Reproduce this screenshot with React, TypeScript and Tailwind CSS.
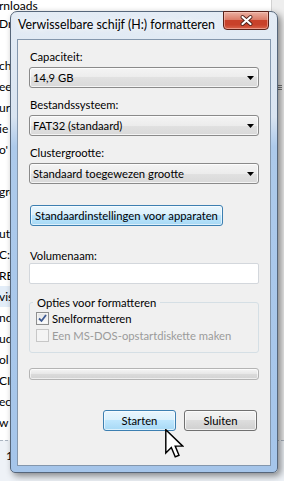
import React from "react";

const rows: { t: string; hl?: boolean }[] = [
  { t: "Dr" },
  { t: "" },
  { t: "ch" },
  { t: "eel" },
  { t: "ur" },
  { t: "ie" },
  { t: "o'" },
  { t: "" },
  { t: "grc" },
  { t: "" },
  { t: "ut" },
  { t: "C:" },
  { t: "RE" },
  { t: "vis", hl: true },
  { t: "nd" },
  { t: "ud" },
  { t: "ol" },
  { t: "CI" },
  { t: "ec" },
  { t: "w" },
];

function Arrow() {
  return (
    <svg width="7" height="4" viewBox="0 0 7 4">
      <path d="M0 0H7L3.5 4Z" fill="#000" />
    </svg>
  );
}

function Combo({ text }: { text: string }) {
  return (
    <div className="mt-[3px] h-[21px] w-full rounded-[3px] border border-[#8a8a8a] bg-[linear-gradient(180deg,#f4f4f4_0%,#ececec_50%,#e1e1e1_50%,#d9d9d9_100%)] flex items-center pl-[3px] pr-[4px] shadow-[inset_0_0_0_1px_rgba(255,255,255,0.7)]">
      <span className="flex-1 leading-[15px] whitespace-nowrap">{text}</span>
      <Arrow />
    </div>
  );
}

const blueBtn =
  "rounded-[3px] border border-[#3c7fb1] bg-[linear-gradient(180deg,#eaf6fd_0%,#d9f0fc_50%,#bee6fd_50%,#a7d9f5_100%)] shadow-[inset_0_0_0_1px_rgba(255,255,255,0.6)] flex items-center justify-center leading-[15px] whitespace-nowrap";
const greyBtn =
  "rounded-[3px] border border-[#707070] bg-[linear-gradient(180deg,#f2f2f2_0%,#ebebeb_50%,#dddddd_50%,#cfcfcf_100%)] shadow-[inset_0_0_0_1px_rgba(255,255,255,0.7)] flex items-center justify-center leading-[15px] whitespace-nowrap";

export default function App() {
  return (
    <div className="relative w-[284px] h-[481px] overflow-hidden bg-white font-['Lato',sans-serif] text-[11.25px] text-black">
      {/* Explorer window behind */}
      <div className="flex flex-col h-full">
        <div className="flex h-[440px]">
          <div className="flex-1 overflow-hidden text-[12px]">
            <div className="-mt-[3px] flex flex-col">
              <div className="h-[16px] flex items-center whitespace-nowrap -ml-[1px] leading-[15px]">rnloads</div>
              {rows.map((r, i) => (
                <div
                  key={i}
                  className={
                    r.hl
                      ? "h-[21px] flex items-center whitespace-nowrap -ml-[1px] leading-[15px] bg-[#e3edf8]"
                      : "h-[21px] flex items-center whitespace-nowrap -ml-[1px] leading-[15px]"
                  }
                >
                  {r.t}
                </div>
              ))}
            </div>
          </div>
          <div className="w-[13px] border-l border-[#d2d2d2] bg-[#eeeeee] flex flex-col pt-[85px] pl-[6px] gap-[1px]">
            <div className="w-[4px] h-px bg-[#7a7a7a]" />
            <div className="w-[4px] h-px bg-[#7a7a7a]" />
            <div className="w-[4px] h-px bg-[#7a7a7a]" />
          </div>
        </div>
        <div className="flex-1 border-t border-dashed border-[#aab4c0] bg-[#eef2f7] pt-[7px] pl-[6px] leading-[15px] text-[12px]">
          1
        </div>
      </div>

      {/* Dialog */}
      <div className="absolute left-[10px] top-[11px] w-[268px] h-[462px] rounded-t-[7px] rounded-b-[5px] border border-[#56667a] bg-[linear-gradient(180deg,#e4ecf5_0px,#d9e4f1_105px,#adcaeb_135px,#a5c5ea_100%)] shadow-[3px_3px_7px_rgba(0,0,0,0.45)] flex flex-col px-[6px] pb-[6px]">
        {/* Title bar */}
        <div className="h-[27px] flex items-start">
          <span className="pt-[5px] pl-[1px] text-[12.4px] leading-[15px] whitespace-nowrap [text-shadow:0_0_6px_#ffffff,0_0_10px_#ffffff]">
            Verwisselbare schijf (H:) formatteren
          </span>
          <div className="ml-auto mr-[2px] -mt-[1px] w-[46px] h-[19px] rounded-b-[4px] border border-[#5a2119] bg-[linear-gradient(180deg,#eab0a2_0%,#dc7d69_45%,#c8412a_50%,#c8412a_75%,#d9654c_100%)] shadow-[inset_0_0_0_1px_rgba(255,210,200,0.5)] flex items-center justify-center">
            <svg width="13" height="11" viewBox="0 0 13 11">
              <path d="M2.5 2L10.5 9M10.5 2L2.5 9" stroke="#4a1e17" strokeWidth="3.8" strokeLinecap="round" />
              <path d="M2.5 2L10.5 9M10.5 2L2.5 9" stroke="#ffffff" strokeWidth="2.2" strokeLinecap="round" />
            </svg>
          </div>
        </div>

        {/* Client area */}
        <div className="flex-1 border border-[#8497ad] bg-[#f0f0f0] px-[11px] pt-[9px] flex flex-col">
          <div className="pl-[1px] leading-[15px]">Capaciteit:</div>
          <Combo text="14,9 GB" />
          <div className="mt-[9px] pl-[1px] leading-[15px]">Bestandssysteem:</div>
          <Combo text="FAT32 (standaard)" />
          <div className="mt-[9px] pl-[1px] leading-[15px]">Clustergrootte:</div>
          <Combo text="Standaard toegewezen grootte" />

          <div className={"mt-[21px] ml-[1px] w-[193px] h-[21px] " + blueBtn}>
            Standaardinstellingen voor apparaten
          </div>

          <div className="mt-[22px] pl-[1px] leading-[15px]">Volumenaam:</div>
          <div className="h-[21px] w-full rounded-[2px] border border-[#d3d7dc] bg-white" />

          <fieldset className="mt-[11px] rounded-[3px] border border-[#d5dfe5] pl-[3px] pb-[8px]">
            <legend className="px-[4px] leading-[15px] whitespace-nowrap">Opties voor formatteren</legend>
            <div className="h-[17px] flex items-center gap-[3px] ml-[3px]">
              <div className="w-[13px] h-[13px] border border-[#8e8f8f] bg-[linear-gradient(180deg,#e2e2e2,#ffffff)] shadow-[inset_0_0_0_1px_#f4f4f4] flex items-center justify-center">
                <svg width="11" height="11" viewBox="0 0 11 11">
                  <path d="M2 5.5L4.5 8L9 2" fill="none" stroke="#3e5a92" strokeWidth="1.8" />
                </svg>
              </div>
              <span className="leading-[15px] whitespace-nowrap">Snelformatteren</span>
            </div>
            <div className="h-[17px] flex items-center gap-[3px] ml-[3px]">
              <div className="w-[13px] h-[13px] border border-[#c7c7c7] bg-[#f4f4f4]" />
              <span className="leading-[15px] whitespace-nowrap text-[#9b9b9b]">
                Een MS-DOS-opstartdiskette maken
              </span>
            </div>
          </fieldset>

          <div className="mt-[15px] h-[12px] w-full rounded-[3px] border border-[#b4b4b4] bg-[linear-gradient(180deg,#f5f5f5_0%,#e8e8e8_45%,#dadada_55%,#d3d3d3_100%)] shadow-[inset_0_0_0_1px_rgba(255,255,255,0.6)]" />

          <div className="mt-[30px] flex justify-end gap-[8px] mr-[2px]">
            <div className={"w-[73px] h-[21px] " + blueBtn}>Starten</div>
            <div className={"w-[73px] h-[21px] " + greyBtn}>Sluiten</div>
          </div>
        </div>
      </div>

      {/* Mouse cursor */}
      <svg
        className="absolute left-[165px] top-[429px]"
        width="19"
        height="29"
        viewBox="0 0 13 20"
      >
        <path
          d="M0.5 0.5V16.5L4.3 12.8L7 19.2L9.6 18.1L7 11.8H12.2Z"
          fill="#ffffff"
          stroke="#000000"
          strokeWidth="1"
          strokeLinejoin="miter"
        />
      </svg>
    </div>
  );
}
